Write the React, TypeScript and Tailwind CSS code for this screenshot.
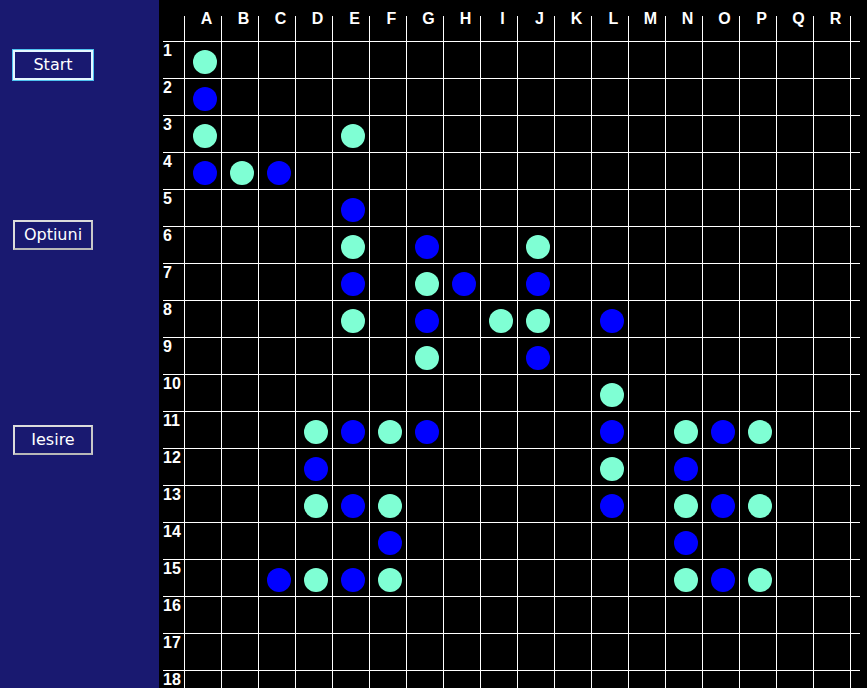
import React from 'react';

const COLS = 'ABCDEFGHIJKLMNOPQR'.split('');

// a = piesa verde, b = piesa albastra
const BOARD = [
  'a',
  'b',
  'a...a',
  'bab',
  '....b',
  '....a.b..a',
  '....b.ab.b',
  '....a.b.aa.b',
  '......a..b',
  '...........a',
  '...abab....b.aba',
  '...b.......a.b',
  '...aba.....b.aba',
  '.....b.......b',
  '..baba.......aba',
  '',
  '',
  '',
].map((r) => r.padEnd(18, '.'));

function MenuButton({ label, active }: { label: string; active?: boolean }) {
  return (
    <button
      className={
        'w-[80px] h-[30px] border-2 bg-[#191970] text-white text-[16px] leading-none font-["Comic_Sans_MS","DejaVu_Sans",cursive] ' +
        (active
          ? 'border-[#e6f8ff] shadow-[0_0_0_1px_#4fc3f0]'
          : 'border-[#dcdcdc] border-b-[#b8b8b8] border-r-[#c8c8c8]')
      }
    >
      {label}
    </button>
  );
}

function Cell({ v }: { v: string }) {
  return (
    <div className="w-[37px] h-full border-l border-white p-2 box-border">
      {v === 'a' && <div className="w-6 h-6 rounded-full bg-[#7fffd4]" />}
      {v === 'b' && <div className="w-6 h-6 rounded-full bg-[#0000ff]" />}
    </div>
  );
}

export default function App() {
  return (
    <div className="flex w-[867px] h-[688px] overflow-hidden bg-black font-['Liberation_Sans',Arial,sans-serif]">
      <div className="w-[159px] shrink-0 bg-[#191970] flex flex-col pl-[13px] pt-[50px]">
        <MenuButton label="Start" active />
        <div className="mt-[140px]">
          <MenuButton label="Optiuni" />
        </div>
        <div className="mt-[175px]">
          <MenuButton label="Iesire" />
        </div>
      </div>
      <div className="flex-1 bg-black pl-[4px] text-white font-bold text-[16px] leading-4">
        <div className="flex h-[41px]">
          <div className="w-[21px]" />
          {COLS.map((c) => (
            <div key={c} className="w-[37px] h-[25px] mt-[16px] border-l border-white box-border">
              <div className="-mt-[5px] pl-[7px] text-center">{c}</div>
            </div>
          ))}
          <div className="w-[10px] h-[25px] mt-[16px] border-l border-white" />
        </div>
        {BOARD.map((row, i) => (
          <div key={i} className="flex w-[697px] h-[37px] shrink-0 border-t border-white box-border">
            <div className="w-[21px] pt-[1px]">{i + 1}</div>
            {row.split('').map((v, j) => (
              <Cell key={j} v={v} />
            ))}
            <div className="w-[10px] border-l border-white" />
          </div>
        ))}
      </div>
    </div>
  );
}
